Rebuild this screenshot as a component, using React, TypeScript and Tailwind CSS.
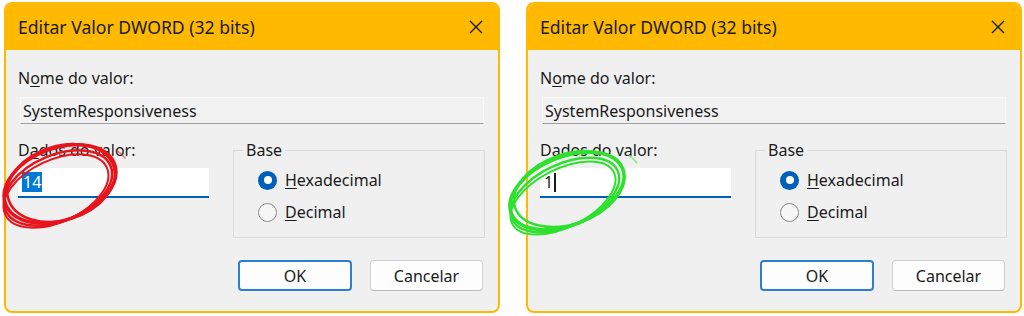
import React from 'react'

const uiFont = { fontFamily: '"Noto Sans", "Open Sans", sans-serif' }

function Radio({ label, checked }: { label: string; checked?: boolean }) {
  const first = label.charAt(0)
  const rest = label.slice(1)
  return (
    <div className="flex h-[32px] items-center gap-[8px]">
      {checked ? (
        <span className="flex h-[19px] w-[19px] items-center justify-center rounded-full bg-[#005fb8]">
          <span className="h-[8px] w-[8px] rounded-full bg-white" />
        </span>
      ) : (
        <span className="h-[19px] w-[19px] rounded-full border border-[#8a8a8a] bg-[#f6f6f6]" />
      )}
      <span className="text-[16px] text-[#1b1b1b]">
        <span className="underline underline-offset-2">{first}</span>
        {rest}
      </span>
    </div>
  )
}

function Dialog({ value, selected }: { value: string; selected?: boolean }) {
  return (
    <div
      className="flex h-[311px] w-[496px] flex-col overflow-hidden rounded-[8px] border-2 border-[#ffb900] bg-[#f0f0f0]"
      style={uiFont}
    >
      {/* Title bar */}
      <div className="flex h-[46px] shrink-0 items-center justify-between bg-[#ffb900] pl-[12px] pr-[14px]">
        <span className="text-[17.6px] text-[#1a1a1a]">Editar Valor DWORD (32 bits)</span>
        <svg width="16" height="16" viewBox="0 0 16 16" className="text-[#1a1a1a]">
          <path d="M2 2 L14 14 M14 2 L2 14" stroke="currentColor" strokeWidth="1.4" fill="none" />
        </svg>
      </div>

      <div className="flex flex-1 flex-col px-[12px] pt-[18px]">
        <div className="h-[20px] text-[16px] leading-[20px] text-[#1b1b1b]">
          N<span className="underline underline-offset-2">o</span>me do valor:
        </div>
        <div className="ml-[2px] mr-[2px] mt-[9px] flex h-[27px] items-center border border-[#f8f8f8] border-b-[#a0a0a0] bg-[#f2f2f2] px-[2px] text-[16px] text-[#1b1b1b]">
          SystemResponsiveness
        </div>

        <div className="mt-[16px] flex">
          <div className="flex w-[191px] flex-col">
            <div className="h-[20px] text-[16px] leading-[20px] text-[#1b1b1b]">
              D<span className="underline underline-offset-2">a</span>dos do valor:
            </div>
            <div className="mt-[8px] flex h-[30px] items-center border-b-2 border-[#005fb8] bg-white px-[4px] text-[16px] text-[#1b1b1b]">
              {selected ? (
                <span className="bg-[#0078d7] px-[1px] leading-[20px] text-white">{value}</span>
              ) : (
                <>
                  <span>{value}</span>
                  <span className="ml-[1px] h-[19px] w-[1.5px] bg-[#1b1b1b]" />
                </>
              )}
            </div>
          </div>

          <fieldset className="ml-auto mr-[1px] w-[252px] border border-[#dadada] pb-[9px]">
            <legend className="ml-[9px] px-[3px] text-[16px] leading-[20px] text-[#1b1b1b]">Base</legend>
            <div className="mt-[4px] flex flex-col pl-[24px]">
              <Radio label="Hexadecimal" checked />
              <Radio label="Decimal" />
            </div>
          </fieldset>
        </div>

        <div className="mr-[3px] mt-[22px] flex justify-end gap-[18px]">
          <button className="h-[31px] w-[114px] rounded-[4px] border-2 border-[#2c7fd0] bg-[#fdfdfd] text-[16px] text-[#1b1b1b]">
            OK
          </button>
          <button className="h-[31px] w-[113px] rounded-[4px] border border-[#d0d0d0] border-b-[#b8b8b8] bg-[#fdfdfd] text-[16px] text-[#1b1b1b]">
            Cancelar
          </button>
        </div>
      </div>
    </div>
  )
}

export default function App() {
  return (
    <div className="relative h-[316px] w-[1024px] overflow-hidden bg-white">
      <div className="flex gap-[26px] pl-[4px] pt-[2px]">
        <Dialog value="14" selected />
        <Dialog value="1" />
      </div>

      {/* Hand-drawn annotations */}
      <svg className="pointer-events-none absolute left-0 top-0" width="1024" height="316">
        <g fill="none" stroke="#e8141c" strokeWidth="3.5" strokeLinecap="round">
          <ellipse cx="60" cy="184" rx="58" ry="36" transform="rotate(-20 60 184)" />
          <ellipse cx="58" cy="188" rx="57" ry="33" transform="rotate(-23 58 188)" strokeWidth="2.5" />
          <ellipse cx="61" cy="183" rx="55" ry="37" transform="rotate(-17 61 183)" strokeWidth="2.5" />
          <ellipse cx="56" cy="191" rx="56" ry="31" transform="rotate(-25 56 191)" strokeWidth="2" />
          <path d="M116 150 Q121 153 125 158" strokeWidth="1.5" opacity="0.5" />
        </g>
        <g fill="none" stroke="#2fe02f" strokeWidth="3.5" strokeLinecap="round">
          <ellipse cx="567" cy="191" rx="60" ry="34" transform="rotate(-22 567 191)" />
          <ellipse cx="565" cy="195" rx="58" ry="31" transform="rotate(-25 565 195)" strokeWidth="2.5" />
          <ellipse cx="569" cy="189" rx="57" ry="35" transform="rotate(-19 569 189)" strokeWidth="2.5" />
          <ellipse cx="563" cy="198" rx="57" ry="29" transform="rotate(-27 563 198)" strokeWidth="2" />
          <path d="M628 155 Q633 158 637 163" strokeWidth="1.5" opacity="0.5" />
        </g>
      </svg>
    </div>
  )
}
